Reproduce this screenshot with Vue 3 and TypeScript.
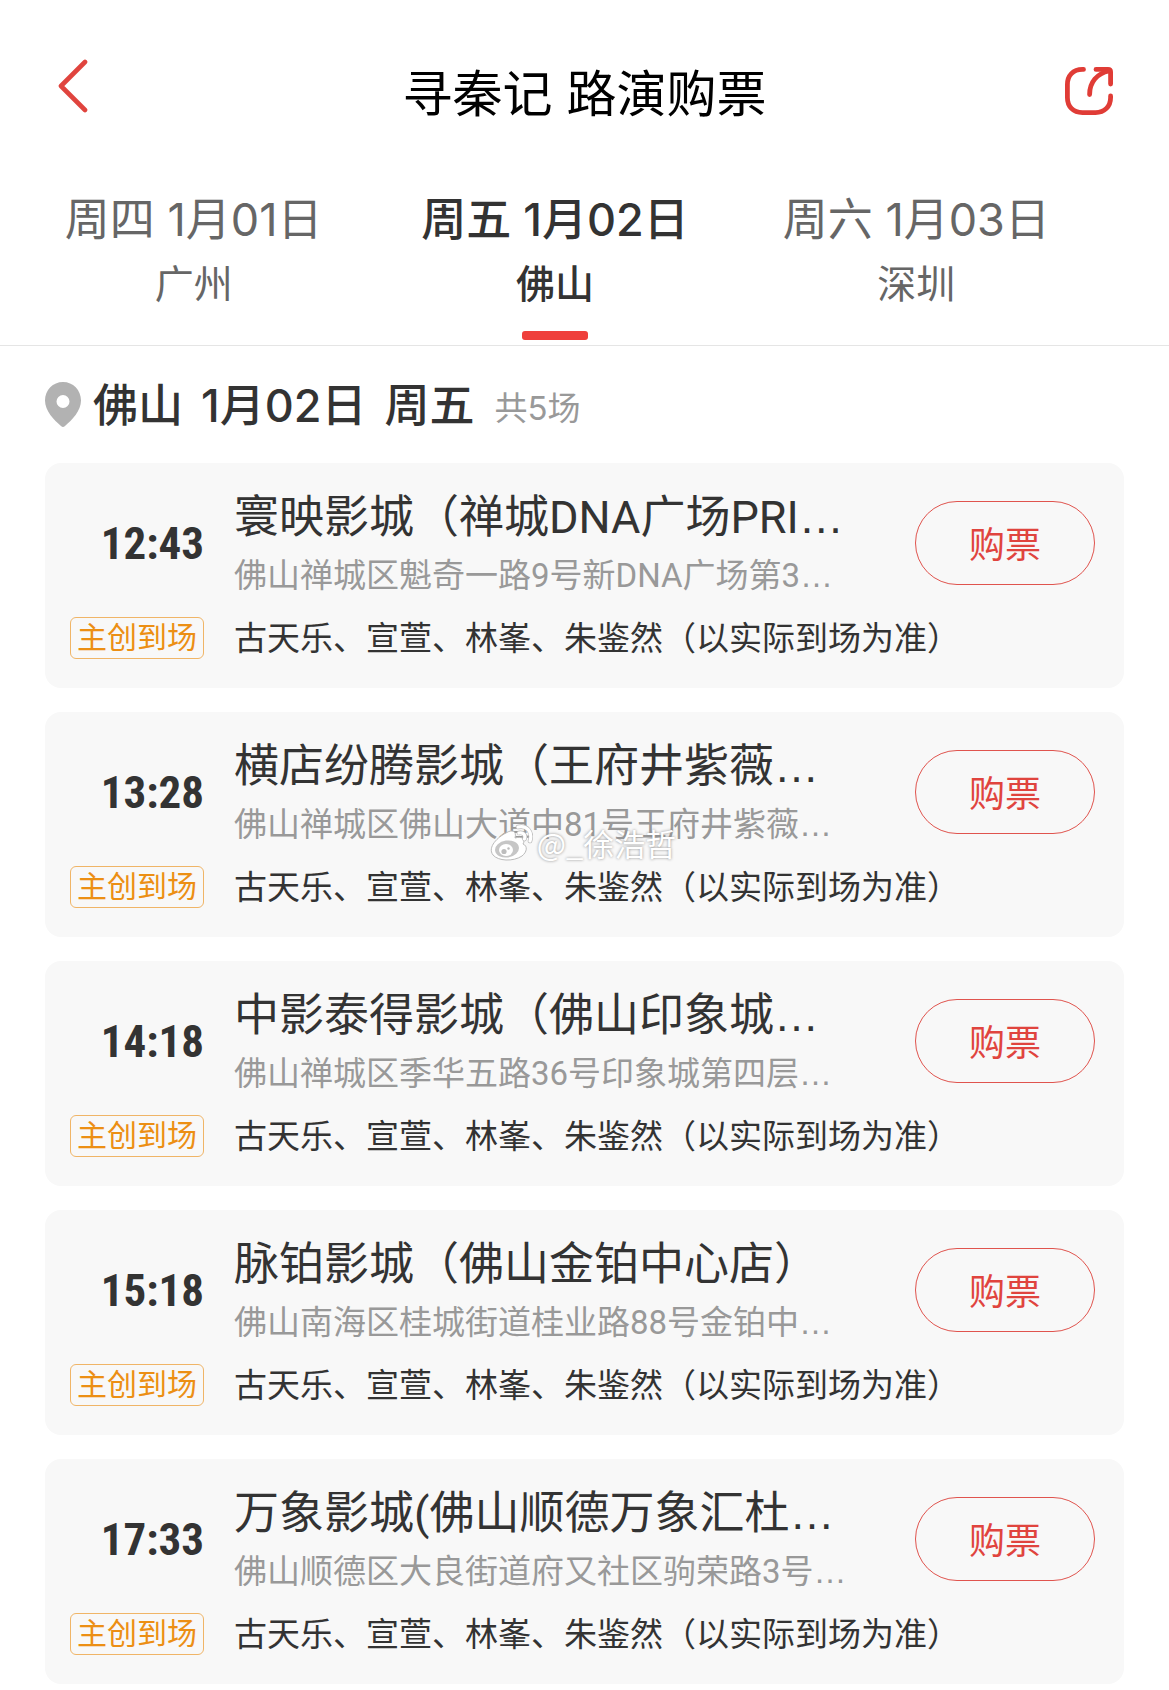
<script setup lang="ts">
import { ref } from 'vue'

interface DayTab {
  id: string
  date: string
  city: string
}

interface Show {
  time: string
  cinema: string
  cinemaCut: boolean
  address: string
}

const tabs: DayTab[] = [
  { id: 'gz', date: '周四 1月01日', city: '广州' },
  { id: 'fs', date: '周五 1月02日', city: '佛山' },
  { id: 'sz', date: '周六 1月03日', city: '深圳' },
]

const active = ref('fs')

const cast = '古天乐、宣萱、林峯、朱鉴然（以实际到场为准）'

const shows: Show[] = [
  { time: '12:43', cinema: '寰映影城（禅城DNA广场PRI', cinemaCut: true, address: '佛山禅城区魁奇一路9号新DNA广场第3' },
  { time: '13:28', cinema: '横店纷腾影城（王府井紫薇', cinemaCut: true, address: '佛山禅城区佛山大道中81号王府井紫薇' },
  { time: '14:18', cinema: '中影泰得影城（佛山印象城', cinemaCut: true, address: '佛山禅城区季华五路36号印象城第四层' },
  { time: '15:18', cinema: '脉铂影城（佛山金铂中心店）', cinemaCut: false, address: '佛山南海区桂城街道桂业路88号金铂中' },
  { time: '17:33', cinema: '万象影城(佛山顺德万象汇杜', cinemaCut: true, address: '佛山顺德区大良街道府又社区驹荣路3号' },
]
</script>

<template>
  <div class="page">
    <header class="bar">
      <button class="icon-btn" type="button" aria-label="返回">
        <svg class="back" viewBox="0 0 32 54" fill="none" stroke="#e0443e" stroke-width="4.6" stroke-linecap="round" stroke-linejoin="round">
          <path d="M29 3 L5 27 L29 51" />
        </svg>
      </button>
      <h1 class="title">寻秦记 路演购票</h1>
      <button class="icon-btn end" type="button" aria-label="分享">
        <svg class="share" viewBox="0 0 48 48" fill="none" stroke="#e03c36" stroke-width="4.8" stroke-linecap="round" stroke-linejoin="round">
          <path d="M18.500 2.400 H17.500 C8 2.400 2.400 8.500 2.400 17.500 V30.500 C2.400 39.500 8 45.600 17.500 45.600 H30.500 C39.500 45.600 45.600 39.500 45.600 30.500 V29" />
          <path d="M31 2.400 H43 Q45.600 2.400 45.600 5 V17" />
          <path d="M24.600 27.500 C24.600 15 32 6.500 44 4" />
        </svg>
      </button>
    </header>

    <nav class="tabs" aria-label="日期">
      <button
        v-for="tab in tabs"
        :key="tab.id"
        type="button"
        class="tab"
        :class="{ active: tab.id === active }"
        @click="active = tab.id"
      >
        <span class="tab-date">{{ tab.date }}</span>
        <span class="tab-city">{{ tab.city }}</span>
        <span class="tab-mark"></span>
      </button>
    </nav>

    <main class="content">
      <div class="summary">
        <svg class="pin" viewBox="0 0 36 45" aria-hidden="true">
          <path fill="#b2b2b2" fill-rule="evenodd" d="M18 0 C28 0 36 8 36 18.500 C36 29 27 38 20 44 Q18 46 16 44 C9 38 0 29 0 18.500 C0 8 8 0 18 0 Z M18 13 A6.500 6.500 0 1 0 18 26 A6.500 6.500 0 1 0 18 13 Z" />
        </svg>
        <h2 class="summary-title">
          <span>佛山</span>
          <span>1月02日</span>
          <span>周五</span>
        </h2>
        <span class="count">共5场</span>
      </div>

      <ul class="list">
        <li v-for="show in shows" :key="show.time" class="card">
          <time class="time">{{ show.time }}</time>
          <div class="info">
            <h3 class="cinema">{{ show.cinema }}<span v-if="show.cinemaCut" class="dots">…</span></h3>
            <p class="address">{{ show.address }}<span class="dots">…</span></p>
          </div>
          <button class="buy" type="button">购票</button>
          <span class="badge">主创到场</span>
          <p class="cast">{{ cast }}</p>
        </li>
      </ul>
    </main>

    <div class="watermark">
      <svg class="weibo" viewBox="0 0 44 38" aria-hidden="true">
        <path fill="#fff" stroke="#bbb" stroke-width="1" d="M17 9 C23 5 28 7 26 14 C33 12 37 15 34 20 C39 22 38 28 33 32 C24 38 9 37 4 31 C-2 23 9 13 17 9 Z" />
        <ellipse cx="18" cy="25" rx="12" ry="8.500" fill="#c6c6c6" transform="rotate(-8 18 25)" />
        <ellipse cx="17" cy="26" rx="7" ry="6" fill="#fff" />
        <circle cx="15" cy="27.500" r="2.600" fill="#bdbdbd" />
        <circle cx="19.500" cy="24.500" r="1.200" fill="#bdbdbd" />
        <path d="M29 3 C38 1 44 8 41 17 M30 9 C34 8 37 11 35.500 15" fill="none" stroke="#bbb" stroke-width="4.600" stroke-linecap="round" />
        <path d="M29 3 C38 1 44 8 41 17 M30 9 C34 8 37 11 35.500 15" fill="none" stroke="#fff" stroke-width="3.200" stroke-linecap="round" />
      </svg>
      <span>@_徐浩哲</span>
    </div>
  </div>
</template>

<style>
body {
  margin: 0;
  background: #fff;
}
</style>

<style scoped>
.page {
  position: relative;
  min-height: 100vh;
  box-sizing: border-box;
  padding-bottom: 6px;
  background: #fff;
  color: #333;
  font-family: Inter, "Noto Sans CJK SC", sans-serif;
}

h1,
h2,
h3,
p,
ul {
  margin: 0;
  padding: 0;
  font-weight: 400;
}

button {
  padding: 0;
  border: 0;
  background: none;
  color: inherit;
  font: inherit;
  cursor: pointer;
}

svg {
  display: block;
}

.bar {
  display: grid;
  grid-template-columns: 80px 1fr 80px;
  align-items: center;
  padding: 54px 56px 0;
}

.icon-btn {
  display: flex;
  align-items: center;
  height: 80px;
}

.icon-btn.end {
  justify-content: flex-end;
}

.back {
  width: 32px;
  height: 54px;
  margin-bottom: 16px;
}

.share {
  width: 48px;
  height: 48px;
  margin-bottom: 6px;
}

.title {
  font-size: 50px;
  line-height: 80px;
  text-align: center;
  color: #000;
}

.tabs {
  display: flex;
  padding: 54px 72px 5px 13px;
  border-bottom: 1px solid #e5e5e5;
}

.tab {
  flex: 1;
  display: flex;
  flex-direction: column;
  align-items: center;
  color: #666;
  white-space: nowrap;
}

.tab-date {
  font-size: 45px;
  line-height: 64px;
}

.tab-city {
  font-size: 39px;
  line-height: 64px;
}

.tab-mark {
  width: 66px;
  height: 9px;
  margin-top: 15px;
  border-radius: 3px;
}

.tab.active {
  color: #333;
  font-weight: 500;
}

.tab.active .tab-mark {
  background: #ef3f3b;
}

.content {
  padding: 29px 45px 0;
}

.summary {
  display: flex;
  align-items: center;
  height: 60px;
  margin-bottom: 28px;
}

.pin {
  width: 36px;
  height: 45px;
  margin-bottom: 2px;
}

.summary-title {
  display: flex;
  gap: 18px;
  margin: 0 20px 0 12px;
  padding-top: 2px;
  font-size: 45px;
  font-weight: 500;
  line-height: 60px;
}

.count {
  padding-top: 6px;
  font-size: 33px;
  line-height: 60px;
  color: #999;
}

.list {
  display: flex;
  flex-direction: column;
  gap: 24px;
  list-style: none;
}

.card {
  display: grid;
  grid-template-columns: 134px 1fr 180px;
  column-gap: 30px;
  row-gap: 13px;
  align-items: center;
  padding: 23px 29px 29px 25px;
  border-radius: 16px;
  background: #f8f8f8;
}

.time {
  margin-bottom: 2px;
  font-family: "Roboto Condensed", Roboto, sans-serif;
  font-size: 45px;
  font-weight: 700;
  line-height: 60px;
  text-align: right;
}

.info {
  min-width: 0;
  padding-top: 2px;
  font-family: Roboto, "Noto Sans CJK SC", sans-serif;
  white-space: nowrap;
}

.cinema {
  font-size: 45px;
  line-height: 60px;
}

.address {
  font-size: 33px;
  line-height: 56px;
  color: #999;
}

.dots {
  font-family: "Liberation Sans", sans-serif;
}

.buy {
  align-self: start;
  height: 84px;
  margin-top: 15px;
  padding-bottom: 2px;
  border: 1px solid #e0544e;
  border-radius: 42px;
  font-size: 36px;
  color: #e0443e;
}

.badge {
  box-sizing: border-box;
  height: 42px;
  border: 1px solid #f0b567;
  border-radius: 6px;
  font-size: 30px;
  line-height: 38px;
  text-align: center;
  color: #ec8f14;
}

.cast {
  grid-column: 2 / 4;
  font-size: 33px;
  line-height: 42px;
  white-space: nowrap;
}

.watermark {
  position: absolute;
  inset: 0;
  display: flex;
  align-items: center;
  justify-content: center;
  gap: 4px;
  padding: 0 4px 4px 0;
  font-family: "Noto Sans CJK SC", sans-serif;
  font-size: 31px;
  line-height: 40px;
  color: #fff;
  text-shadow: 0 0 3px #888;
  pointer-events: none;
}

.weibo {
  width: 44px;
  height: 38px;
}
</style>
